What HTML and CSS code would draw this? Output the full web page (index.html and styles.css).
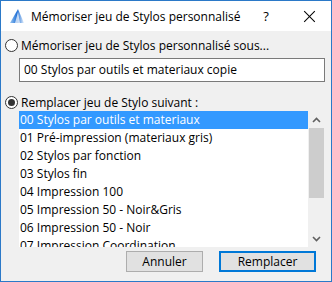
FILE: index.html
```html
<!DOCTYPE html>
<html lang="fr">
<head>
  <meta charset="UTF-8">
  <title>Mémoriser jeu de Stylos personnalisé</title>
  <link rel="stylesheet" href="styles.css">
</head>
<body>
  <div class="dialog">
    <div class="titlebar">
      <svg class="app-icon" width="16" height="16" viewBox="0 0 16 16">
        <defs>
          <linearGradient id="g" x1="0" y1="0" x2="1" y2="0">
            <stop offset="0" stop-color="#9cc8f2"/>
            <stop offset="0.5" stop-color="#1f6fd6"/>
            <stop offset="1" stop-color="#e8f2fc"/>
          </linearGradient>
        </defs>
        <polygon points="1,15 9,1 15,15" fill="url(#g)"/>
        <polygon points="6,15 9,4 11,15" fill="#ffffff" opacity="0.7"/>
      </svg>
      <span class="title">Mémoriser jeu de Stylos personnalisé</span>
      <div class="caption-buttons">
        <span class="help">?</span>
        <span class="dismiss"><span class="stroke-a"></span><span class="stroke-b"></span></span>
      </div>
    </div>
    <div class="content">
      <label class="option">
        <span class="radio"></span>
        Mémoriser jeu de Stylos personnalisé sous...
      </label>
      <div class="text-field">00 Stylos par outils et materiaux copie</div>
      <label class="option">
        <span class="radio checked"></span>
        Remplacer jeu de Stylo suivant :
      </label>
      <div class="listbox">
        <ul class="items">
          <li class="selected">00 Stylos par outils et materiaux</li>
          <li>01 Pré-impression (materiaux gris)</li>
          <li>02 Stylos par fonction</li>
          <li>03 Stylos fin</li>
          <li>04 Impression 100</li>
          <li>05 Impression 50 - Noir&amp;Gris</li>
          <li>06 Impression 50 - Noir</li>
          <li>07 Impression Coordination</li>
        </ul>
        <div class="scrollbar">
          <div class="arrow">
            <svg width="9" height="6" viewBox="0 0 9 6"><path d="M1 5 L4.5 1.5 L8 5" fill="none" stroke="#606060" stroke-width="1.6"/></svg>
          </div>
          <div class="track"><div class="thumb"></div></div>
          <div class="arrow">
            <svg width="9" height="6" viewBox="0 0 9 6"><path d="M1 1 L4.5 4.5 L8 1" fill="none" stroke="#606060" stroke-width="1.6"/></svg>
          </div>
        </div>
      </div>
      <div class="buttons">
        <button class="btn">Annuler</button>
        <button class="btn default">Remplacer</button>
      </div>
    </div>
  </div>
</body>
</html>
```

FILE: styles.css
```css
body {
  margin: 0;
  font-family: "Open Sans", "Noto Sans", sans-serif;
  font-size: 12px;
  color: #000;
}

.dialog {
  width: 332px;
  height: 282px;
  box-sizing: border-box;
  border: 1px solid #2b79c8;
  background-color: #f0f0f0;
  display: flex;
  flex-direction: column;
}

.titlebar {
  height: 30px;
  flex-shrink: 0;
  background-color: #fff;
  display: flex;
  align-items: center;
  padding-left: 8px;
}

.app-icon {
  margin-right: 6px;
  flex-shrink: 0;
}

.title {
  flex: 1;
  min-width: 0;
  font-size: 12px;
  white-space: nowrap;
}

.caption-buttons {
  display: flex;
  align-items: center;
  gap: 28px;
  padding-right: 16px;
}

.help {
  width: 20px;
  font-size: 13px;
  text-align: center;
}

.dismiss {
  display: block;
  position: relative;
  width: 11px;
  height: 11px;
  background-color: #fff;
}

.stroke-a,
.stroke-b {
  display: block;
  position: absolute;
  left: -2px;
  top: 5px;
  width: 15px;
  height: 1px;
  background-color: #000;
  transform: rotate(45deg);
}

.stroke-b {
  transform: rotate(-45deg);
}

.content {
  flex: 1;
  display: flex;
  flex-direction: column;
  padding: 6px 6px 0 4px;
}

.option {
  display: flex;
  align-items: center;
  height: 16px;
  gap: 3px;
}

.radio {
  width: 11px;
  height: 11px;
  border: 1px solid #333;
  border-radius: 50%;
  background-color: #fff;
  display: flex;
  justify-content: center;
  align-items: center;
}

.radio.checked::after {
  content: "";
  width: 7px;
  height: 7px;
  border-radius: 50%;
  background-color: #333;
}

.text-field {
  margin: 5px 0 12px 14px;
  height: 22px;
  border: 1px solid #7a7a7a;
  background-color: #fff;
  padding-left: 4px;
  line-height: 22px;
}

.listbox {
  margin: 1px 0 0 14px;
  height: 136px;
  display: flex;
  background-color: #fff;
  overflow: hidden;
}

.items {
  list-style: none;
  margin: 0;
  padding: 0;
  flex: 1;
}

.items li {
  height: 18px;
  line-height: 18px;
  padding-left: 1px;
  white-space: nowrap;
}

.items li.selected {
  background-color: #3399ff;
  color: #fff;
}

.scrollbar {
  width: 17px;
  background-color: #f0f0f0;
  display: flex;
  flex-direction: column;
}

.arrow {
  height: 17px;
  display: flex;
  justify-content: center;
  align-items: center;
}

.track {
  flex: 1;
}

.thumb {
  height: 70px;
  margin: 0 1px;
  background-color: #cdcdcd;
}

.buttons {
  display: flex;
  justify-content: flex-end;
  gap: 16px;
  margin-top: 4px;
  padding-right: 9px;
}

.btn {
  height: 21px;
  width: 77px;
  font-family: "Open Sans", "Noto Sans", sans-serif;
  font-size: 12px;
  background-color: #e1e1e1;
  border: 1px solid #adadad;
  padding: 0;
}

.btn.default {
  width: 97px;
  border: 2px solid #0078d7;
}
```
